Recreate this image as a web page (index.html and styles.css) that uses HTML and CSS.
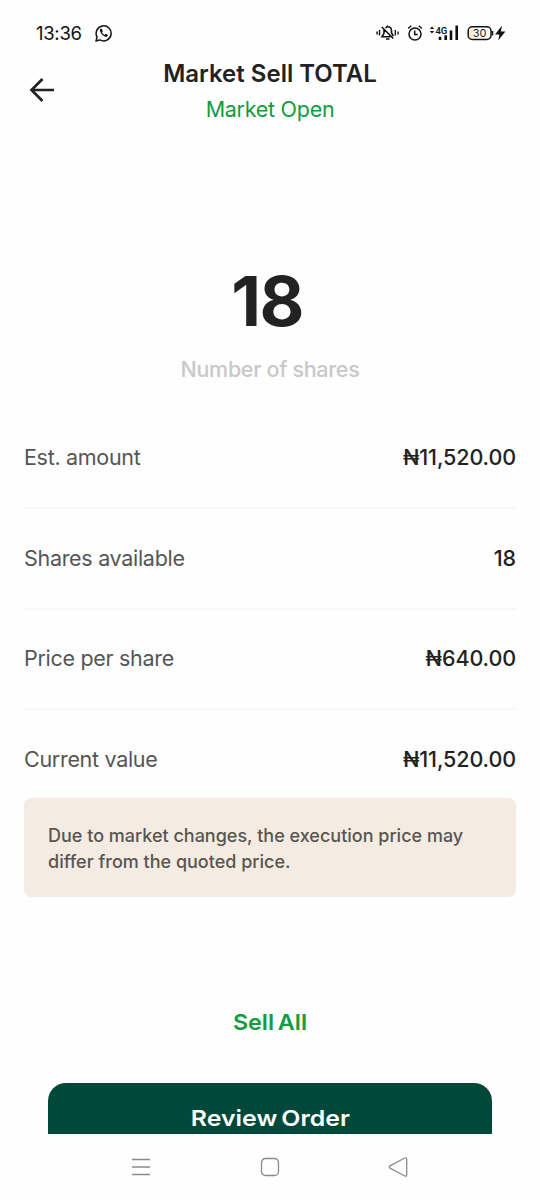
FILE: index.html
```html
<!DOCTYPE html>
<html lang="en">
<head>
<meta charset="utf-8">
<title>Market Sell TOTAL</title>
<link rel="stylesheet" href="styles.css">
</head>
<body>
<div class="screen">
  <div class="status">
    <span class="clock">13:36</span>
    <svg class="whatsapp" width="18" height="18" viewBox="0 0 18 18" fill="none"><path d="M1 17l1.100-4A7.500 7.500 0 1 1 5 15.900z" stroke="#111" stroke-width="1.500" stroke-linejoin="round"/><path d="M5.600 4.800c-.9.700-.9 2 .2 3.900 1.200 2 2.900 3.500 4.800 4 1.200.3 2.200-.4 2.300-1.700l-2.200-1.200-1.100 1.100C8.200 10.300 7.400 9.300 7 8.300l.8-1-1-2.500z" fill="#111"/></svg>
    <svg class="indicators" width="132" height="22" viewBox="375 22 132 22" fill="none" stroke="#111">
      <path d="M377 31.500v3M379.500 30v5.500M395.300 30v5.500M398 31.500v3" stroke-width="1.400"/>
      <path d="M384 29.500v3.800l-2 3.500h8.500M385.500 28c2.500-2.500 6-.8 6 2.400v2.400l1.800 3.200M387.500 25.500v1.500M386 39h3.500M381.800 27l11.500 11.500" stroke-width="1.600"/>
      <circle cx="415" cy="34" r="6" stroke-width="1.500"/>
      <path d="M414.700 30.500v4h3M408.200 28.500l3-2.700M421.800 28.500l-3-2.700" stroke-width="1.500"/>
      <path d="M429.800 29l2.200-2.600 2.200 2.600zM429.800 31l2.200 2.600 2.200-2.600z" fill="#111" stroke="none"/>
      <path d="M440 36.800V40M445.700 35.300V40M451 30.500V40M456.700 25.500V40" stroke-width="2.600"/>
      <rect x="468.200" y="26.700" width="22.800" height="12.800" rx="4.200" fill="#fff" stroke-width="1.500"/>
      <path d="M473 28v10.200h-1.200a2.500 2.500 0 0 1-2.500-2.500v-5.200a2.500 2.500 0 0 1 2.500-2.500z" fill="#fbedc9" stroke="none"/>
      <path d="M492.500 31v4.500" stroke-width="1.500"/>
      <path d="M502 25.500l-7 9h4.400l-1.200 6 7.200-9h-4.500z" fill="#111" stroke="none"/>
      <text class="net" x="435.500" y="34">4G</text>
      <text class="charge" x="479.500" y="37" text-anchor="middle">30</text>
    </svg>
  </div>
  <header class="header">
    <svg class="back" width="26" height="26" viewBox="0 0 26 26" fill="none" stroke="#222" stroke-width="2.700"><path d="M25 13H3M13.500 2L2.500 13l11 11"/></svg>
    <div class="heading">
      <h1 class="title">Market Sell TOTAL</h1>
      <p class="market">Market Open</p>
    </div>
  </header>
  <section class="quantity">
    <div class="count">18</div>
    <div class="caption">Number of shares</div>
  </section>
  <dl class="details">
    <div class="row"><dt>Est. amount</dt><dd>₦11,520.00</dd></div>
    <div class="row"><dt>Shares available</dt><dd>18</dd></div>
    <div class="row"><dt>Price per share</dt><dd>₦640.00</dd></div>
    <div class="row"><dt>Current value</dt><dd>₦11,520.00</dd></div>
  </dl>
  <p class="notice">Due to market changes, the execution price may<br>differ from the quoted price.</p>
  <div class="actions">
    <button class="sell-all"><span>Sell All</span></button>
    <button class="review"><span>Review Order</span></button>
  </div>
  <nav class="navbar">
    <svg width="20" height="20" viewBox="0 0 20 20" fill="none" stroke="#8b8b8b" stroke-width="1.300"><path d="M1 2.500h18M1 10h18M1 17.500h18"/></svg>
    <svg width="20" height="20" viewBox="0 0 20 20" fill="none" stroke="#8b8b8b" stroke-width="1.300"><rect x="1.500" y="1.500" width="17" height="17" rx="4"/></svg>
    <svg width="20" height="20" viewBox="0 0 20 20" fill="none" stroke="#8b8b8b" stroke-width="1.300"><path d="M16.800 1L2 8.900q-1.600 1.100 0 2.200L16.800 19q1.900.6 1.900-1.300V2.300q0-1.900-1.900-1.300z"/></svg>
  </nav>
</div>
</body>
</html>
```
FILE: styles.css
```css
* { box-sizing: border-box; margin: 0; padding: 0; }
body { background: #fefefe; font-family: Inter, "Liberation Sans", sans-serif; color: #222; }
.screen { width: 540px; height: 1200px; display: flex; flex-direction: column; overflow: hidden; }
.status { height: 56px; padding: 22px 33px 12px 36px; display: flex; align-items: center; flex: none; }
.clock { width: 46px; font-size: 18.5px; letter-spacing: -0.300px; color: #111; line-height: 22px; white-space: nowrap; }
.whatsapp { margin-left: 13px; }
.indicators { margin-left: auto; }
.net { font: 600 9.500px Roboto, sans-serif; letter-spacing: -0.200px; fill: #111; stroke: none; }
.charge { font: 400 11px Inter, sans-serif; fill: #222; stroke: none; }
.header { height: 71px; display: grid; grid-template-columns: 56px 1fr 56px; flex: none; }
.back { margin: 21px 0 0 29px; }
.heading { text-align: center; }
.title { font-size: 24px; font-weight: 600; line-height: 36px; }
.market { font-size: 21.5px; line-height: 35px; letter-spacing: -0.280px; color: #109c40; }
.quantity { margin-top: 137px; text-align: center; flex: none; }
.count { font-size: 69px; font-weight: 700; line-height: 74px; letter-spacing: -1.5px; margin-right: 6px; }
.caption { margin-top: 13px; font-size: 21.5px; font-weight: 500; line-height: 36px; letter-spacing: -0.320px; color: #c8c8c8; }
.details { margin: 20px 24px 0; flex: none; }
.row { height: 100.5px; display: flex; justify-content: space-between; align-items: center; border-bottom: 2px solid #f8f8f8; font-size: 21.5px; }
.row:first-child { height: 102px; }
.row:nth-child(3) { padding-bottom: 1px; }
.row:last-child { height: 100px; padding-bottom: 2px; border-bottom: 0; }
.row dt { color: #555; letter-spacing: -0.300px; }
.row dd { font-weight: 450; letter-spacing: -0.100px; }
.notice { margin: -12.5px 24px 0; height: 99px; padding: 25px 24px 22px; border-radius: 8px; background: #f4ebe2; color: #595550; font-size: 18px; font-weight: 500; line-height: 26px; flex: none; }
.actions { padding: 105px 48px 0; height: 237px; overflow: hidden; display: flex; flex-direction: column; flex: none; }
.sell-all, .review { border: 0; font: 600 22px/40px Inter, sans-serif; word-spacing: -2px; flex: none; }
.sell-all span, .review span { display: inline-block; transform: scaleX(1.060); }
.review span { transform: scaleX(1.130); }
.sell-all { align-self: center; background: none; color: #109c40; }
.review { margin-top: 41px; height: 70px; border-radius: 18px; background: #00493a; color: #fff; }
.navbar { height: 66px; padding: 0 132px 0 131px; display: flex; justify-content: space-between; align-items: center; flex: none; }
```
